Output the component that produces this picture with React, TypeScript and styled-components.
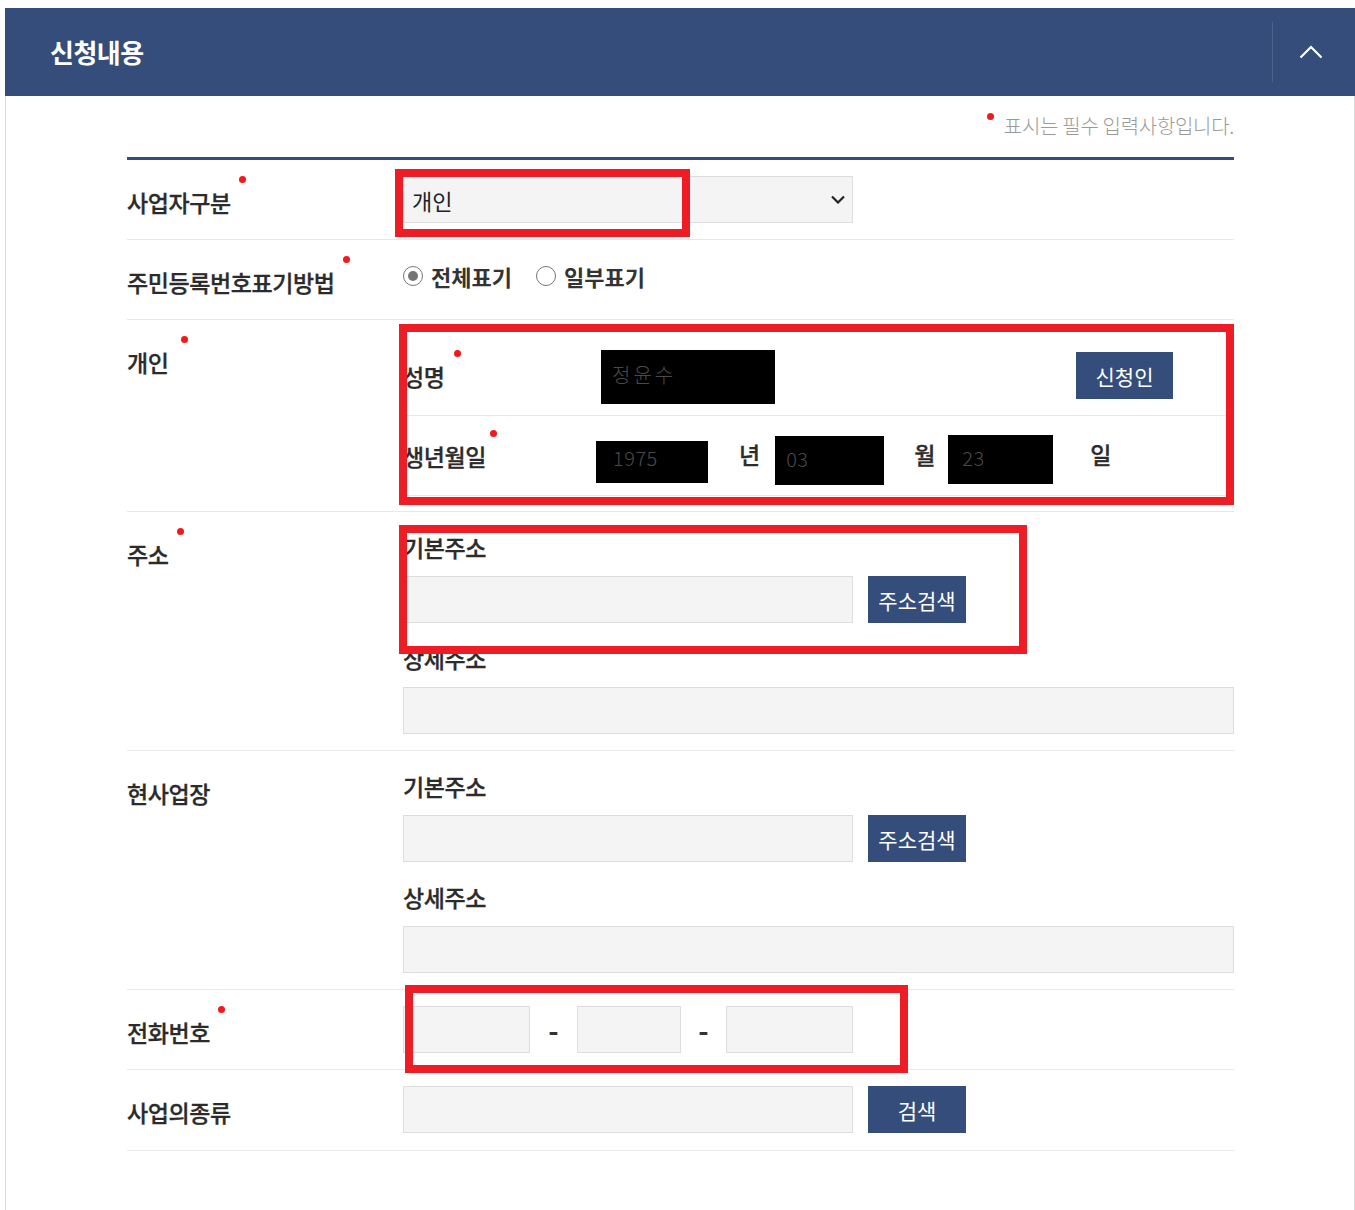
import React from "react";
import styled, { createGlobalStyle } from "styled-components";

const NAVY = "#354d7a";
const MARK = "#ee1c25";

const Global = createGlobalStyle`
  html, body { margin: 0; padding: 0; background: #fff; }
  body { font-family: "Noto Sans CJK KR", "Noto Sans", sans-serif; color: #333; }
  * { box-sizing: border-box; }
`;

const Page = styled.div`
  position: relative;
  width: 1355px;
  height: 1210px;
  padding: 8px 0 0 5px;
  overflow: hidden;
`;

const Panel = styled.section`
  width: 1350px;
`;

const Header = styled.header`
  height: 88px;
  background: ${NAVY};
  display: flex;
  align-items: center;
  justify-content: space-between;
`;

const Title = styled.h2`
  margin: 0;
  padding-left: 45px;
  font-size: 26px;
  font-weight: 700;
  line-height: 1;
  color: #fff;
  letter-spacing: -0.5px;
`;

const Toggle = styled.button`
  width: 83px;
  height: 60px;
  padding: 0 6px 0 0;
  border: 0;
  border-left: 1px solid rgba(255, 255, 255, 0.12);
  background: transparent;
  display: flex;
  align-items: center;
  justify-content: center;
`;

const Body = styled.div`
  border-left: 1px solid #dcdcdc;
  border-right: 1px solid #dcdcdc;
  padding: 0 120px 60px 121px;
  min-height: 1114px;
`;

const Notice = styled.p`
  margin: 0;
  height: 61px;
  padding-top: 16px;
  text-align: right;
  font-size: 20px;
  line-height: 28px;
  font-weight: 300;
  color: #9a9a9a;
  letter-spacing: -0.3px;
`;

const NoticeDot = styled.i`
  display: inline-block;
  width: 7px;
  height: 7px;
  border-radius: 50%;
  background: #f01a1a;
  vertical-align: top;
  margin: 1px 10px 0 0;
`;

const Table = styled.div`
  border-top: 3px solid ${NAVY};
`;

const Row = styled.div`
  display: grid;
  grid-template-columns: 276px 1fr;
  border-bottom: 1px solid #e8e8e8;
`;

const Label = styled.div<{ $pb?: number }>`
  padding: 26px 0 ${(p) => p.$pb ?? 21}px;
  font-size: 23px;
  line-height: 32px;
  font-weight: 500;
  color: #2b2b2b;
  letter-spacing: -0.4px;
  -webkit-text-stroke: 0.3px currentColor;
`;

const Req = styled.span`
  position: relative;
  display: inline-block;
`;

const Dot = styled.i<{ $gap?: number }>`
  position: absolute;
  top: -10px;
  right: ${(p) => -(7 + (p.$gap ?? 8))}px;
  width: 7px;
  height: 7px;
  border-radius: 50%;
  background: #f01a1a;
`;

const Cell = styled.div<{ $pt: number; $pb: number }>`
  padding: ${(p) => p.$pt}px 0 ${(p) => p.$pb}px;
`;

const SelectBox = styled.div`
  width: 450px;
  height: 47px;
  background: #f4f4f4;
  border: 1px solid #dddddd;
  display: flex;
  align-items: center;
  justify-content: space-between;
  padding: 0 7px 0 8px;
  font-size: 22px;
  color: #222;
`;

const RadioGroup = styled.div`
  display: flex;
  align-items: center;
  height: 32px;
  gap: 24px;
`;

const RadioItem = styled.label`
  display: flex;
  align-items: center;
  gap: 8px;
  font-size: 22px;
  font-weight: 700;
  color: #333;
`;

const RadioMark = styled.span<{ $on?: boolean }>`
  width: 20px;
  height: 20px;
  border-radius: 50%;
  border: 1.5px solid #767676;
  background: #fff;
  display: flex;
  align-items: center;
  justify-content: center;
  &::after {
    content: "";
    width: 10px;
    height: 10px;
    border-radius: 50%;
    background: ${(p) => (p.$on ? "#767676" : "transparent")};
  }
`;

const SubRow = styled.div`
  display: grid;
  grid-template-columns: 193px 1fr;
  align-items: center;
  height: 80px;
  border-bottom: 1px solid #e8e8e8;
`;

const SubLabel = styled.div`
  font-size: 23px;
  line-height: 32px;
  font-weight: 500;
  color: #2b2b2b;
  letter-spacing: -0.4px;
  -webkit-text-stroke: 0.3px currentColor;
`;

const Line = styled.div`
  display: flex;
  align-items: center;
`;

const Redacted = styled.div<{ $w: number; $h: number; $pl: number; $mt?: number; $pb?: number }>`
  width: ${(p) => p.$w}px;
  height: ${(p) => p.$h}px;
  margin-top: ${(p) => p.$mt ?? 0}px;
  padding-left: ${(p) => p.$pl}px;
  padding-bottom: ${(p) => p.$pb ?? 0}px;
  background: #000;
  color: #4a4a4a;
  font-size: 20px;
  font-weight: 300;
  display: flex;
  align-items: center;
  letter-spacing: 0.5px;
`;

const NameBox = styled(Redacted)`
  margin-left: 5px;
  letter-spacing: 3px;
`;

const Unit = styled.span<{ $l: number; $r: number }>`
  margin: -3px ${(p) => p.$r}px 0 ${(p) => p.$l}px;
  font-size: 23px;
  line-height: 32px;
  font-weight: 500;
  color: #2b2b2b;
  -webkit-text-stroke: 0.3px currentColor;
`;

const Button = styled.button<{ $w?: number }>`
  width: ${(p) => p.$w ?? 98}px;
  height: 47px;
  flex: none;
  border: 0;
  padding: 0;
  background: ${NAVY};
  color: #fff;
  font-family: inherit;
  font-size: 21px;
  font-weight: 400;
  letter-spacing: 0;
`;

const ApplicantButton = styled(Button)`
  margin-left: auto;
  margin-right: 61px;
`;

const FieldLabel = styled.div<{ $mt?: number }>`
  margin-top: ${(p) => p.$mt ?? 0}px;
  margin-bottom: 13px;
  font-size: 23px;
  line-height: 32px;
  font-weight: 500;
  color: #2b2b2b;
  letter-spacing: -0.4px;
  -webkit-text-stroke: 0.3px currentColor;
`;

const InputRow = styled.div`
  display: flex;
  align-items: center;
  gap: 15px;
`;

const Input = styled.div<{ $w?: number }>`
  width: ${(p) => (p.$w ? `${p.$w}px` : "100%")};
  height: 47px;
  flex: none;
  background: #f4f4f4;
  border: 1px solid #dddddd;
`;

const PhoneRow = styled.div`
  display: flex;
  align-items: center;
`;

const Dash = styled.span<{ $w: number }>`
  width: ${(p) => p.$w}px;
  text-align: center;
  font-size: 28px;
  font-weight: 700;
  line-height: 32px;
  color: #333;
  padding-top: 1px;
`;

const Annotation = styled.div<{ $x: number; $y: number; $w: number; $h: number }>`
  position: absolute;
  left: ${(p) => p.$x}px;
  top: ${(p) => p.$y}px;
  width: ${(p) => p.$w}px;
  height: ${(p) => p.$h}px;
  border: 8px solid ${MARK};
  pointer-events: none;
`;

const ChevronUp = () => (
  <svg width="24" height="14" viewBox="0 0 24 14" fill="none">
    <path d="M1.5 12.5 L12 2 L22.5 12.5" stroke="#fff" strokeWidth="2.2" />
  </svg>
);

const ChevronDown = () => (
  <svg width="14" height="9" viewBox="0 0 14 9" fill="none">
    <path d="M1 1.5 L7 7.5 L13 1.5" stroke="#222" strokeWidth="2.2" />
  </svg>
);

const Required: React.FC<{ children: React.ReactNode; gap?: number }> = ({ children, gap }) => (
  <Req>
    {children}
    <Dot $gap={gap} />
  </Req>
);

export default function App() {
  return (
    <Page>
      <Global />
      <Panel>
        <Header>
          <Title>신청내용</Title>
          <Toggle aria-label="접기">
            <ChevronUp />
          </Toggle>
        </Header>
        <Body>
          <Notice>
            <NoticeDot />
            표시는 필수 입력사항입니다.
          </Notice>
          <Table>
            <Row>
              <Label>
                <Required>사업자구분</Required>
              </Label>
              <Cell $pt={16} $pb={16}>
                <SelectBox>
                  <span>개인</span>
                  <ChevronDown />
                </SelectBox>
              </Cell>
            </Row>

            <Row>
              <Label>
                <Required>주민등록번호표기방법</Required>
              </Label>
              <Cell $pt={20} $pb={0}>
                <RadioGroup>
                  <RadioItem>
                    <RadioMark $on />
                    전체표기
                  </RadioItem>
                  <RadioItem>
                    <RadioMark />
                    일부표기
                  </RadioItem>
                </RadioGroup>
              </Cell>
            </Row>

            <Row>
              <Label>
                <Required gap={12}>개인</Required>
              </Label>
              <Cell $pt={16} $pb={15}>
                <SubRow>
                  <SubLabel>
                    <Required gap={9}>성명</Required>
                  </SubLabel>
                  <Line>
                    <NameBox $w={174} $h={54} $pl={11} $mt={2} $pb={5}>
                      정윤수
                    </NameBox>
                    <ApplicantButton $w={97}>신청인</ApplicantButton>
                  </Line>
                </SubRow>
                <SubRow>
                  <SubLabel>
                    <Required gap={4}>생년월일</Required>
                  </SubLabel>
                  <Line>
                    <Redacted $w={112} $h={42} $pl={17} $mt={12} $pb={8}>
                      1975
                    </Redacted>
                    <Unit $l={31} $r={15}>년</Unit>
                    <Redacted $w={109} $h={49} $pl={11} $mt={10} $pb={4}>
                      03
                    </Redacted>
                    <Unit $l={30} $r={13}>월</Unit>
                    <Redacted $w={105} $h={49} $pl={14} $mt={8} $pb={4}>
                      23
                    </Redacted>
                    <Unit $l={37} $r={0}>일</Unit>
                  </Line>
                </SubRow>
              </Cell>
            </Row>

            <Row>
              <Label>
                <Required>주소</Required>
              </Label>
              <Cell $pt={19} $pb={16}>
                <FieldLabel>기본주소</FieldLabel>
                <InputRow>
                  <Input $w={450} />
                  <Button>주소검색</Button>
                </InputRow>
                <FieldLabel $mt={19}>상세주소</FieldLabel>
                <Input />
              </Cell>
            </Row>

            <Row>
              <Label>현사업장</Label>
              <Cell $pt={19} $pb={16}>
                <FieldLabel>기본주소</FieldLabel>
                <InputRow>
                  <Input $w={450} />
                  <Button>주소검색</Button>
                </InputRow>
                <FieldLabel $mt={19}>상세주소</FieldLabel>
                <Input />
              </Cell>
            </Row>

            <Row>
              <Label>
                <Required>전화번호</Required>
              </Label>
              <Cell $pt={16} $pb={16}>
                <PhoneRow>
                  <Input $w={127} />
                  <Dash $w={47}>-</Dash>
                  <Input $w={104} />
                  <Dash $w={45}>-</Dash>
                  <Input $w={127} />
                </PhoneRow>
              </Cell>
            </Row>

            <Row>
              <Label $pb={22}>사업의종류</Label>
              <Cell $pt={16} $pb={16}>
                <InputRow>
                  <Input $w={450} />
                  <Button>검색</Button>
                </InputRow>
              </Cell>
            </Row>
          </Table>
        </Body>
      </Panel>

      <Annotation $x={395} $y={169} $w={295} $h={68} />
      <Annotation $x={399} $y={324} $w={835} $h={181} />
      <Annotation $x={399} $y={525} $w={628} $h={129} />
      <Annotation $x={405} $y={985} $w={503} $h={88} />
    </Page>
  );
}
